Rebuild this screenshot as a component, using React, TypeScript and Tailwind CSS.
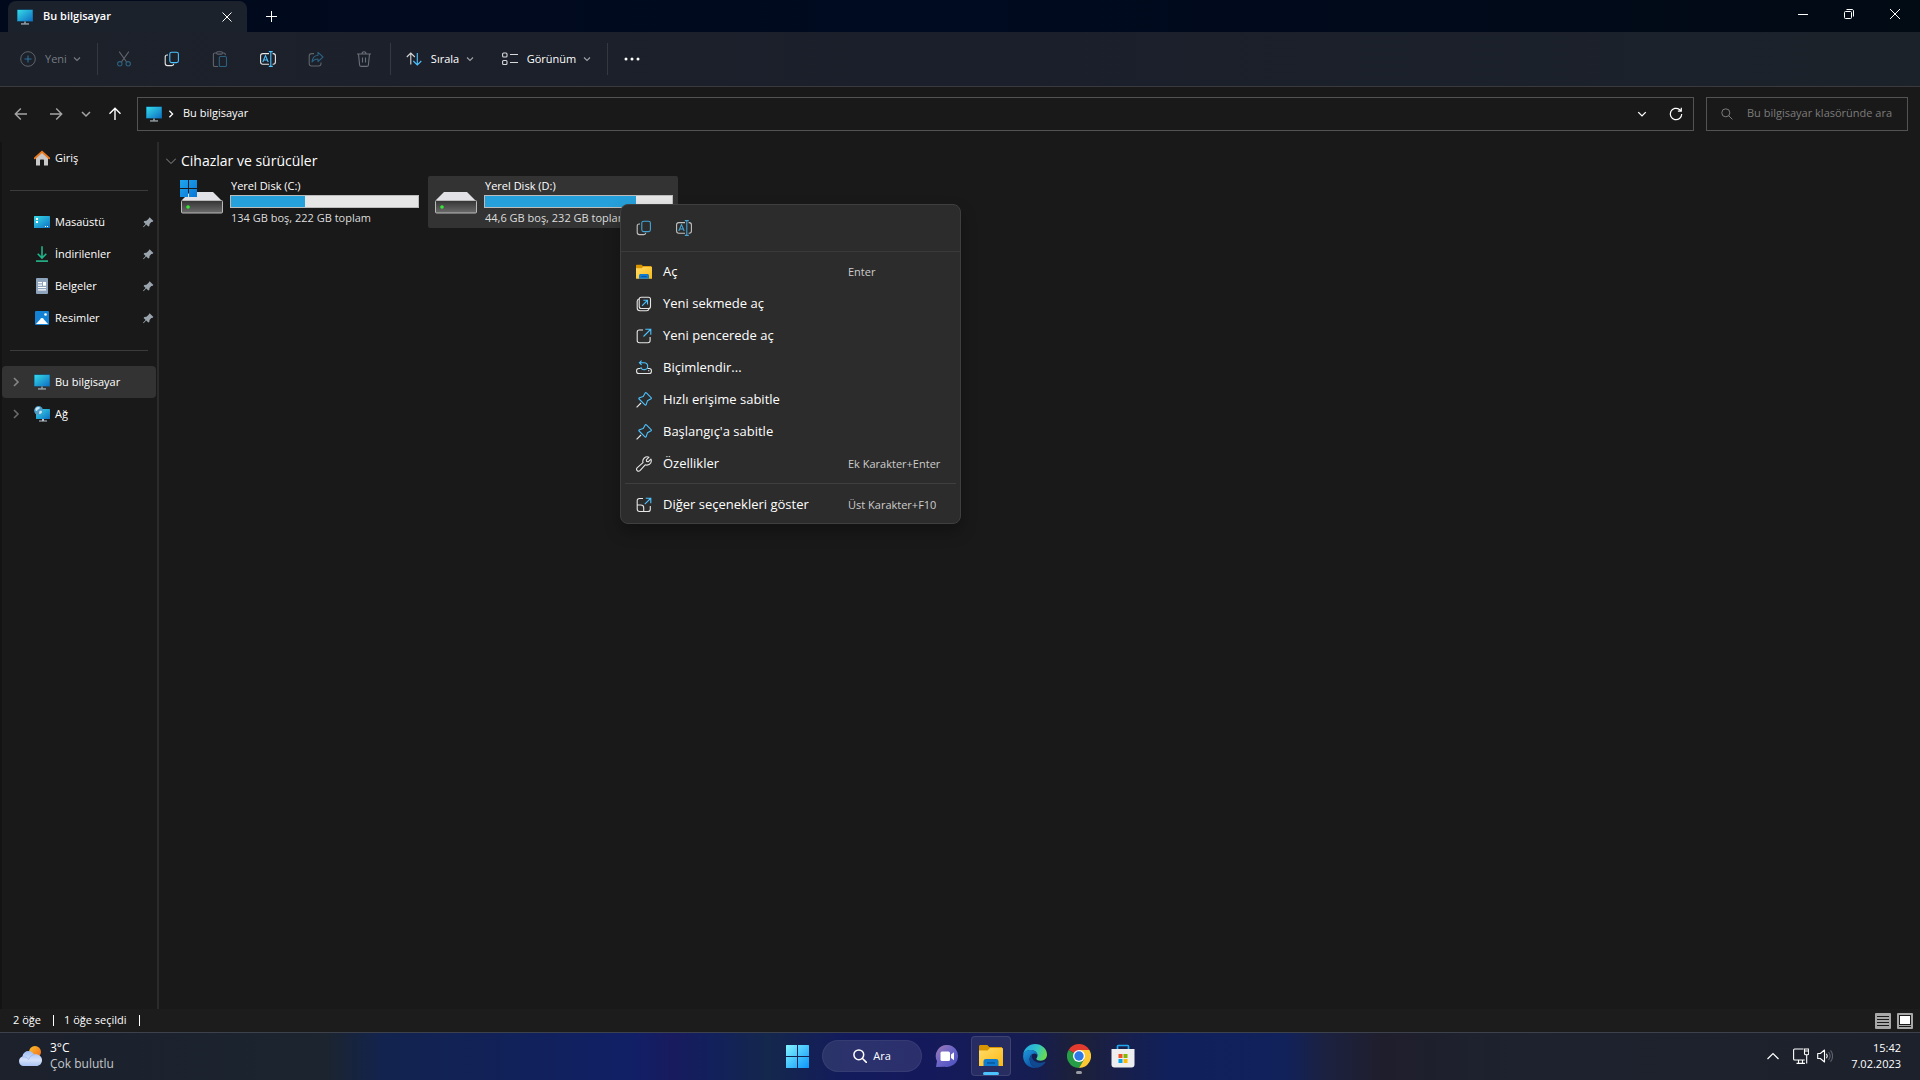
import type { ReactNode } from 'react';

type IconProps = { className?: string };

function ChevronDown({ className = 'h-2 w-2' }: IconProps) {
	return (
		<svg viewBox="0 0 8 8" fill="none" stroke="currentColor" strokeWidth="1.1" className={className}>
			<path d="M1 2.5 4 5.5 7 2.5" />
		</svg>
	);
}

function ChevronRight({ className = 'h-2.5 w-2' }: IconProps) {
	return (
		<svg viewBox="0 0 8 10" fill="none" stroke="currentColor" strokeWidth="1.6" className={className}>
			<path d="M2 1 6 5 2 9" />
		</svg>
	);
}

function MonitorIcon() {
	return (
		<svg viewBox="0 0 16 16" className="h-4 w-4 shrink-0">
			<defs>
				<linearGradient id="screen" x1="0" y1="0" x2="1" y2="1">
					<stop offset="0" stopColor="#35dbe6" />
					<stop offset="1" stopColor="#0f6fc4" />
				</linearGradient>
			</defs>
			<rect x="0" y="0.5" width="16" height="12" rx="0.5" fill="#0c6a9e" />
			<rect x="0.6" y="1" width="14.8" height="11" fill="url(#screen)" />
			<path d="M7 12.5h2v2H7z" fill="#7b8a95" />
			<path d="M4 14.4h8v1.1H4z" fill="#b7c4cc" />
		</svg>
	);
}

function CopyIcon({ className = 'h-4 w-4' }: IconProps) {
	return (
		<svg viewBox="0 0 16 16" fill="none" strokeWidth="1.1" className={className}>
			<path d="M4 4H3.2C2 4 1.2 4.8 1.2 6v6.3c0 1.4.9 2.3 2.3 2.3h4.3c1.2 0 1.9-.7 2-1.8" stroke="#e6e6e6" />
			<rect x="5.8" y="1.2" width="8.6" height="10.4" rx="1.8" stroke="#4cc2ff" />
		</svg>
	);
}

function RenameIcon({ className = 'h-4 w-4' }: IconProps) {
	return (
		<svg viewBox="0 0 16 16" fill="none" strokeWidth="1.1" className={className}>
			<path d="M9 2.6H2.8C1.5 2.6.6 3.5.6 4.8v6.2c0 1.3.9 2.2 2.2 2.2H9M12.6 2.6h.6c1.3 0 2.2.9 2.2 2.2V11c0 1.3-.9 2.2-2.2 2.2h-.6" stroke="#e6e6e6" />
			<path d="M10.8.6v14.8M8.8.6h4M8.8 15.4h4M2.8 11l2.7-6.4L8.2 11M3.7 9h3.6" stroke="#4cc2ff" />
		</svg>
	);
}

function CutIcon() {
	return (
		<svg viewBox="0 0 16 16" fill="none" strokeWidth="1.1" className="h-4 w-4">
			<path d="M3.2.6 10.6 11M12.8.6 5.4 11" stroke="#5f646c" />
			<circle cx="3.8" cy="12.8" r="2.2" stroke="#2c607f" />
			<circle cx="12.2" cy="12.8" r="2.2" stroke="#2c607f" />
		</svg>
	);
}

function PasteIcon() {
	return (
		<svg viewBox="0 0 16 16" fill="none" strokeWidth="1.1" className="h-4 w-4">
			<path d="M4.5 2H2.8C2 2 1.4 2.6 1.4 3.4v10.8c0 .8.6 1.3 1.4 1.3h3.4M10.5 2h1.4c.8 0 1.4.6 1.4 1.4v.9" stroke="#5f646c" />
			<rect x="4.6" y=".7" width="5.8" height="2.4" rx="1.1" stroke="#5f646c" />
			<rect x="7.3" y="5.5" width="7.2" height="10" rx="1.3" stroke="#2c607f" />
		</svg>
	);
}

function ShareIcon() {
	return (
		<svg viewBox="0 0 16 16" fill="none" strokeWidth="1.1" strokeLinejoin="round" className="h-4 w-4">
			<path d="M6 2.6H3.6C2.2 2.6 1.2 3.5 1.2 5v7.6c0 1.5 1 2.4 2.4 2.4h7c1.5 0 2.4-1 2.4-2.4v-1.2" stroke="#5f646c" />
			<path d="M10 1.4 15 6l-5 4.6V8C7.2 8 5.4 8.9 4 11c.3-3.7 2.4-6.5 6-6.8z" stroke="#2c607f" />
		</svg>
	);
}

function TrashIcon() {
	return (
		<svg viewBox="0 0 16 16" fill="none" stroke="#6b7078" strokeWidth="1.1" className="h-4 w-4">
			<path d="M1 3h14M6 3c0-1.4.8-2.2 2-2.2S10 1.6 10 3M2.5 3l1.1 11c.1.9.7 1.4 1.5 1.4h5.8c.8 0 1.4-.5 1.5-1.4L13.5 3M6.5 6.5v5M9.5 6.5v5" />
		</svg>
	);
}

function PinIcon() {
	return (
		<svg viewBox="0 0 12 12" className="h-3 w-3">
			<path d="M7.6 1.2 11.4 5 10.2 6 9.3 6 7.6 7.9 7.3 10 6.3 10.6 4.2 8.5 1.6 11.2 1 10.7 3.6 7.9 1.6 5.9 2.4 5 4.4 4.8 6.4 3z" fill="#9aa4ad" />
		</svg>
	);
}

function PinOutline() {
	return (
		<svg viewBox="0 0 16 16" fill="none" strokeWidth="1.1" strokeLinejoin="round" className="h-4 w-4">
			<path d="M.6 15.4 5 11" stroke="#e6e6e6" />
			<path d="M9.2.9c.3-.4.8-.4 1.2 0l4.7 4.7c.4.4.4.9 0 1.2L11.4 8.8l-1.2 3.8c-.2.6-.8.7-1.2.3L3.1 7c-.4-.4-.3-1 .3-1.2l3.8-1.2z" stroke="#4cc2ff" />
		</svg>
	);
}

function FolderIcon({ className = 'h-4 w-4' }: IconProps) {
	return (
		<svg viewBox="0 0 24 24" className={className}>
			<defs>
				<linearGradient id="folder" x1="0" y1="0" x2="1" y2="1">
					<stop offset="0" stopColor="#ffdc69" />
					<stop offset="1" stopColor="#fdb913" />
				</linearGradient>
			</defs>
			<path d="M0 2.5C0 1.7.6 1 1.5 1h6.8l2 2H23v5H0z" fill="#d99500" />
			<path d="M0 6.5h8.5L11 4h12c.6 0 1 .4 1 1v17H0z" fill="url(#folder)" />
			<path d="M4.5 22v-4.5c0-1.7 1-2.5 2.5-2.5h10c1.5 0 2.5.8 2.5 2.5V22z" fill="#0f7bd0" />
			<path d="M8 18.3h8v1.3H8z" fill="#0a4f91" />
		</svg>
	);
}

function HomeIcon() {
	return (
		<svg viewBox="0 0 16 16" className="h-4 w-4">
			<path d="M2 7 8 2l6 5v8.5h-4v-5c0-.6-.3-1-1-1H7c-.7 0-1 .4-1 1v5H2z" fill="#c9c9c9" />
			<path d="M.8 8.3 8 1.8l7.2 6.5" fill="none" stroke="#ea7a20" strokeWidth="1.9" strokeLinecap="round" />
		</svg>
	);
}

function DesktopIcon() {
	return (
		<svg viewBox="0 0 16 16" className="h-4 w-4">
			<rect y="2" width="16" height="12" rx=".6" fill="url(#screen)" />
			<path d="M2 4h2v2H2zM2 7h2v2H2zM11 12h1v1h-1zM13 12h1v1h-1z" fill="#fff" />
		</svg>
	);
}

function DownloadIcon() {
	return (
		<svg viewBox="0 0 16 16" fill="none" className="h-4 w-4">
			<path d="M8 .2v11M3.7 7.7 8 12l4.3-4.3" stroke="#1fb389" strokeWidth="1.6" />
			<path d="M2 14.3h12v1.6H2z" fill="#25b98c" />
		</svg>
	);
}

function DocumentIcon() {
	return (
		<svg viewBox="0 0 16 16" className="h-4 w-4">
			<rect x="2" width="12" height="16" rx="1" fill="#8ea4bd" />
			<path d="M4 4h4v1.2H4zM4 6.5h4v1.2H4zM9 4h3v3.7H9zM4 9h8v1.1H4zM4 11.3h8v1.1H4z" fill="#fff" />
		</svg>
	);
}

function PictureIcon() {
	return (
		<svg viewBox="0 0 16 16" className="h-4 w-4">
			<rect x="1" y="1" width="14" height="14" rx="1" fill="#1382d4" />
			<path d="M2 14 7.2 8.3c.5-.5 1.1-.5 1.6 0L14 14z" fill="#fff" />
			<circle cx="11.5" cy="4.5" r="1.3" fill="#fff" />
		</svg>
	);
}

function NetworkIcon() {
	return (
		<svg viewBox="0 0 16 16" className="h-4 w-4">
			<rect x="2" y="3" width="14" height="10" rx=".5" fill="url(#screen)" />
			<path d="M8 13h2v1.5H8zM5 14.5h8v1H5z" fill="#b7c4cc" />
			<circle cx="4.6" cy="4.6" r="4.5" fill="#4b9cc8" />
			<path d="M1.5 2.5C3 .8 5.5.8 6 1.8 5.5 3.5 3.5 3 3 5 2 5.5 1 4 1.5 2.5zM5.5 5c1.5-.5 2.7 0 2.5 1C7.5 8 5.5 8.5 5 7.5z" fill="#c8e6f3" />
		</svg>
	);
}

function SearchIcon({ className = 'h-3 w-3' }: IconProps) {
	return (
		<svg viewBox="0 0 12 12" fill="none" stroke="currentColor" className={className}>
			<circle cx="4.8" cy="4.8" r="4" />
			<path d="m7.7 7.7 3.7 3.7" />
		</svg>
	);
}

function Arrow({ className }: IconProps) {
	return (
		<svg viewBox="0 0 14 14" fill="none" stroke="currentColor" strokeWidth="1.4" className={className}>
			<path d="M13 7H1.5M6.8 1.5 1.3 7l5.5 5.5" />
		</svg>
	);
}

function Drive({ system }: { system: boolean }) {
	return (
		<svg viewBox="0 0 48 36" className="h-9 w-12 shrink-0">
			<defs>
				<linearGradient id="drive" x1="0" y1="0" x2="0" y2="1">
					<stop offset="0" stopColor="#333" />
					<stop offset="1" stopColor="#6c6c6c" />
				</linearGradient>
				<linearGradient id="winlogo" x1="0" y1="0" x2="1" y2="1">
					<stop offset="0" stopColor="#1fa5ee" />
					<stop offset="1" stopColor="#0876d6" />
				</linearGradient>
			</defs>
			<path d="M12 14h23l8.500 8.500h-40z" fill="#e2e2e6" />
			<rect x="3.5" y="22.5" width="41" height="12.5" rx="1" fill="url(#drive)" stroke="#b9b9b9" />
			<circle cx="10" cy="29" r="1.8" fill="#35e835" />
			{system && <path d="M2 2h8v8H2zM11 2h8v8h-8zM2 11h8v8H2zM11 11h8v8h-8z" fill="url(#winlogo)" />}
		</svg>
	);
}

function OpenTabIcon() {
	return (
		<svg viewBox="0 0 16 16" fill="none" strokeWidth="1.1" className="h-4 w-4">
			<path d="M3 3C1.8 3.3 1.2 4 1.2 5.2V12c0 1.6 1 2.7 2.7 2.7h6.8c1.2 0 2-.6 2.3-1.7" stroke="#e6e6e6" />
			<rect x="3.2" y="1.2" width="11.3" height="11.3" rx="2" stroke="#e6e6e6" />
			<path d="m6 9.8 5.3-5.3M7.3 4.3h4.2v4.2" stroke="#4cc2ff" />
		</svg>
	);
}

function OpenWindowIcon() {
	return (
		<svg viewBox="0 0 16 16" fill="none" strokeWidth="1.1" className="h-4 w-4">
			<path d="M7 2H3.3C2 2 1.2 2.8 1.2 4v8.5c0 1.3.9 2.2 2.2 2.2h8.5c1.3 0 2.2-.9 2.2-2.2V9" stroke="#e6e6e6" />
			<path d="m7.5 8.5 7-7M9.3 1.2h5.5v5.5" stroke="#4cc2ff" />
		</svg>
	);
}

function FormatIcon() {
	return (
		<svg viewBox="0 0 16 16" fill="none" strokeWidth="1.1" className="h-4 w-4">
			<path d="M4.5 8.5H2.8c-1.3 0-2.2.9-2.2 2.2v.8c0 1.2.9 2 2.2 2h10.4c1.3 0 2.2-.8 2.2-2v-.8c0-1.3-.9-2.2-2.2-2.2h-1.7" stroke="#e6e6e6" />
			<path d="M12 10.7h1.3" stroke="#e6e6e6" />
			<path d="M3.5 2.7h4.7a3.5 3.5 0 1 1-3.4 4.4M5.6.6 3.4 2.7l2.2 2.1" stroke="#4cc2ff" />
		</svg>
	);
}

function WrenchIcon() {
	return (
		<svg viewBox="0 0 16 16" fill="none" stroke="#e6e6e6" strokeWidth="1.1" strokeLinejoin="round" className="h-4 w-4">
			<path d="M13 1.2 10.3 3.9l.3 1.5 1.6.4 2.7-2.7c1.1 2.4-.3 6-4 6-.7 0-1.2-.1-1.7-.3l-5 5.6c-1 1-2.3.9-3 .2-.8-.8-.8-2 .1-2.9l5.7-5C5.9 3 9.500-.3 13 1.2z" />
		</svg>
	);
}

function MoreOptionsIcon() {
	return (
		<svg viewBox="0 0 16 16" fill="none" strokeWidth="1.1" className="h-4 w-4">
			<path d="M7 1.5H3.4c-1.3 0-2.2.9-2.2 2.2V12c0 1.5 1 2.5 2.4 2.5H12c1.4 0 2.3-1 2.3-2.3V9M1.2 8h3.6C6.6 8 7.7 9 7.7 10.7v3.8" stroke="#e6e6e6" />
			<path d="m8.8 7.2 5.7-5.7M9.8 1.2h5v5" stroke="#4cc2ff" />
		</svg>
	);
}

const pinned = [
	{ label: 'Masaüstü', icon: <DesktopIcon /> },
	{ label: 'İndirilenler', icon: <DownloadIcon /> },
	{ label: 'Belgeler', icon: <DocumentIcon /> },
	{ label: 'Resimler', icon: <PictureIcon /> },
];

const drives = [
	{ name: 'Yerel Disk (C:)', info: '134 GB boş, 222 GB toplam', used: 39.6, system: true, selected: false },
	{ name: 'Yerel Disk (D:)', info: '44,6 GB boş, 232 GB toplam', used: 80.8, system: false, selected: true },
];

const menuItems = [
	{ label: 'Aç', icon: <FolderIcon />, shortcut: 'Enter' },
	{ label: 'Yeni sekmede aç', icon: <OpenTabIcon /> },
	{ label: 'Yeni pencerede aç', icon: <OpenWindowIcon /> },
	{ label: 'Biçimlendir...', icon: <FormatIcon /> },
	{ label: 'Hızlı erişime sabitle', icon: <PinOutline /> },
	{ label: "Başlangıç'a sabitle", icon: <PinOutline /> },
	{ label: 'Özellikler', icon: <WrenchIcon />, shortcut: 'Ek Karakter+Enter' },
];

function TitleBar() {
	return (
		<header className="flex h-8 bg-gradient-to-r from-[#010a1c] via-[#000a20] to-[#020a14] pl-2">
			<div className="mt-px flex w-[239px] items-center rounded-t-lg bg-[#1c222b] pl-[9px] pr-2">
				<MonitorIcon />
				<span className="ml-2.5 flex-1 font-semibold">Bu bilgisayar</span>
				<button type="button" aria-label="Sekmeyi kapat" className="flex h-6 w-6 items-center justify-center">
					<svg viewBox="0 0 10 10" stroke="currentColor" className="h-2.5 w-2.5">
						<path d="m.5.5 9 9M9.5.5l-9 9" />
					</svg>
				</button>
			</div>
			<button type="button" aria-label="Yeni sekme" className="ml-2 flex w-8 items-center justify-center">
				<svg viewBox="0 0 11 11" stroke="currentColor" className="h-[11px] w-[11px]">
					<path d="M5.5 0v11M0 5.5h11" />
				</svg>
			</button>
			<div className="ml-auto flex pb-1 pr-0.5">
				<button type="button" aria-label="Simge durumuna küçült" className="flex w-[46px] items-center justify-center">
					<svg viewBox="0 0 10 10" stroke="currentColor" className="h-2.5 w-2.5">
						<path d="M0 5.5h10" />
					</svg>
				</button>
				<button type="button" aria-label="Geri yükle" className="flex w-[46px] items-center justify-center">
					<svg viewBox="0 0 10 10" fill="none" stroke="currentColor" className="h-2.5 w-2.5">
						<rect x=".5" y="2.5" width="7" height="7" rx="1" />
						<path d="M2.5.5H8c.9 0 1.5.6 1.5 1.5v5.5" />
					</svg>
				</button>
				<button type="button" aria-label="Kapat" className="flex w-[46px] items-center justify-center">
					<svg viewBox="0 0 10 10" stroke="currentColor" className="h-2.5 w-2.5">
						<path d="m0 0 10 10M10 0 0 10" />
					</svg>
				</button>
			</div>
		</header>
	);
}

function ToolButton({ label, children }: { label: string; children: ReactNode }) {
	return (
		<button type="button" aria-label={label} className="flex h-8 w-12 items-center justify-center">
			{children}
		</button>
	);
}

function CommandBar() {
	return (
		<div className="flex h-[55px] items-center border-b border-[#3a3a3e] bg-gradient-to-r from-[#1c212a] via-[#1a1f2b] to-[#1c222a] pl-5">
			<button type="button" className="flex w-[77px] items-center text-[#777b82]">
				<svg viewBox="0 0 16 16" fill="none" className="h-4 w-4">
					<circle cx="8" cy="8" r="7.3" stroke="#5f646c" />
					<path d="M8 4.5v7M4.5 8h7" stroke="#2c7099" strokeWidth="1.1" />
				</svg>
				<span className="ml-[9px] mr-1.5">Yeni</span>
				<ChevronDown />
			</button>
			<div className="h-8 w-px bg-[#343940]" />
			<div className="flex pl-0.5">
				<ToolButton label="Kes"><CutIcon /></ToolButton>
				<ToolButton label="Kopyala"><CopyIcon /></ToolButton>
				<ToolButton label="Yapıştır"><PasteIcon /></ToolButton>
				<ToolButton label="Yeniden adlandır"><RenameIcon /></ToolButton>
				<ToolButton label="Paylaş"><ShareIcon /></ToolButton>
				<ToolButton label="Sil"><TrashIcon /></ToolButton>
			</div>
			<div className="mx-0.5 h-8 w-px bg-[#343940]" />
			<button type="button" className="ml-[13px] flex items-center font-medium">
				<svg viewBox="0 0 16 16" fill="none" strokeWidth="1.1" className="h-4 w-4">
					<path d="M4.8 2v11.5M.8 6l4-4 4 4" stroke="#d8d8d8" />
					<path d="M11.3 2v12M7.3 10l4 4 4-4" stroke="#4cc2ff" />
				</svg>
				<span className="ml-2 mr-1.5 w-[30px] whitespace-nowrap">Sırala</span>
				<ChevronDown className="h-2 w-2 text-[#a0a3a8]" />
			</button>
			<button type="button" className="ml-7 flex items-center font-medium">
				<svg viewBox="0 0 16 16" fill="none" stroke="#d8d8d8" strokeWidth="1.1" className="h-4 w-4">
					<rect x=".6" y="2" width="4.4" height="4" rx="1" />
					<rect x=".6" y="9.5" width="4.4" height="4" rx="1" />
					<path d="M8 3.5h8M8 11.5h8" />
				</svg>
				<span className="ml-2 mr-1.5 w-[51px] whitespace-nowrap">Görünüm</span>
				<ChevronDown className="h-2 w-2 text-[#a0a3a8]" />
			</button>
			<div className="ml-4 h-8 w-px bg-[#343940]" />
			<button type="button" aria-label="Daha fazla" className="ml-4 flex h-8 w-4 items-center justify-center">
				<svg viewBox="0 0 16 4" fill="currentColor" className="h-1 w-4">
					<circle cx="2" cy="2" r="1.5" />
					<circle cx="8" cy="2" r="1.5" />
					<circle cx="14" cy="2" r="1.5" />
				</svg>
			</button>
		</div>
	);
}

function AddressRow() {
	return (
		<div className="flex h-[55px] items-center gap-3 pb-0.5 pl-[14px] pr-3">
			<nav className="flex items-center text-[#a5a5a5]">
				<button type="button" aria-label="Geri"><Arrow className="h-3.5 w-3.5" /></button>
				<button type="button" aria-label="İleri" className="ml-[21px]"><Arrow className="h-3.5 w-3.5 rotate-180" /></button>
				<button type="button" aria-label="Son konumlar" className="ml-[18px]">
					<svg viewBox="0 0 10 10" fill="none" stroke="currentColor" strokeWidth="1.5" className="h-2.5 w-2.5">
						<path d="m1 3 4 4 4-4" />
					</svg>
				</button>
				<button type="button" aria-label="Yukarı" className="ml-[17px] text-white"><Arrow className="h-3.5 w-3.5 rotate-90" /></button>
			</nav>
			<div className="ml-[3px] flex h-[34px] flex-1 items-center border border-[#535353] pl-2 pr-2.5">
				<MonitorIcon />
				<ChevronRight className="ml-[5px] h-2 w-2" />
				<button type="button" className="ml-2">Bu bilgisayar</button>
				<button type="button" aria-label="Önceki konumlar" className="ml-auto">
					<ChevronDown className="h-2.5 w-2.5" />
				</button>
				<button type="button" aria-label="Yenile" className="ml-[22px]">
					<svg viewBox="0 0 14 14" fill="none" stroke="currentColor" strokeWidth="1.2" className="h-3.5 w-3.5">
						<path d="M12.7 7A5.7 5.7 0 1 1 10.5 2.5L12.3 4M12.3.8V4.2H8.9" />
					</svg>
				</button>
			</div>
			<label className="flex h-[34px] w-[202px] items-center border border-[#535353] pl-[14px] text-[#7c7c7c]">
				<SearchIcon />
				<input
					type="search"
					aria-label="Bu bilgisayar klasöründe ara"
					placeholder="Bu bilgisayar klasöründe ara"
					className="ml-[14px] min-w-0 flex-1 bg-transparent outline-none placeholder:text-[#7c7c7c]"
				/>
			</label>
		</div>
	);
}

function Sidebar() {
	return (
		<nav className="w-[157px] shrink-0 border-l-2 border-[#131313]">
			<a href="#giris" className="flex h-8 items-center gap-[5px] pl-8">
				<HomeIcon />
				Giriş
			</a>
			<div className="flex h-8 items-center pl-2 pr-[9px]"><hr className="w-full border-[#3b3b3b]" /></div>
			{pinned.map((item) => (
				<a key={item.label} href={`#${item.label}`} className="flex h-8 items-center gap-[5px] pl-8 pr-[3px]">
					{item.icon}
					<span className="flex-1">{item.label}</span>
					<PinIcon />
				</a>
			))}
			<div className="flex h-8 items-center pl-2 pr-[9px]"><hr className="w-full border-[#3b3b3b]" /></div>
			<a href="#bilgisayar" className="mr-px flex h-8 items-center rounded-sm bg-[#333333] pl-2.5">
				<ChevronRight className="mr-[14px] h-2.5 w-2 text-[#868686]" />
				<MonitorIcon />
				<span className="ml-[5px]">Bu bilgisayar</span>
			</a>
			<a href="#ag" className="mr-px flex h-8 items-center pl-2.5">
				<ChevronRight className="mr-[14px] h-2.5 w-2 text-[#6a6a6a]" />
				<NetworkIcon />
				<span className="ml-[5px]">Ağ</span>
			</a>
		</nav>
	);
}

function DriveGrid() {
	return (
		<main className="flex-1 border-l-2 border-[#2b2b2b] pl-[7px] pt-2">
			<h2 className="flex h-[22px] items-center text-sm">
				<svg viewBox="0 0 10 10" fill="none" stroke="#8f8f8f" className="mr-[5px] h-2.5 w-2.5">
					<path d="M0 2.5 5 7.5l5-5" />
				</svg>
				Cihazlar ve sürücüler
			</h2>
			<div className="mt-1 flex flex-wrap gap-1 pl-2">
				{drives.map((drive) => (
					<div
						key={drive.name}
						className={`flex h-[52px] w-[250px] rounded-xs pl-1 pt-0.5 ${drive.selected ? 'bg-[#333333]' : ''}`}
					>
						<Drive system={drive.system} />
						<div className="ml-1 w-[189px] leading-[15px]">
							<div className="pl-px">{drive.name}</div>
							<div
								role="progressbar"
								aria-label={drive.name}
								aria-valuenow={drive.used}
								className="my-0.5 h-[13px] border border-[#bcbcbc] bg-[#e6e6e6]"
							>
								<div className="h-full bg-[#26a0da]" style={{ width: `${drive.used}%` }} />
							</div>
							<div className="whitespace-nowrap pl-px text-[#dddddd]">{drive.info}</div>
						</div>
					</div>
				))}
			</div>
		</main>
	);
}

function ContextMenu() {
	return (
		<div role="menu" className="absolute left-[620px] top-[204px] w-[341px] rounded-lg border border-[#3f3f3f] bg-[#2c2c2c] pb-0.5 text-[13px] shadow-[0_8px_16px_rgba(0,0,0,0.28)]">
			<div className="flex h-[47px] items-center gap-6 border-b border-[#3f3f3f] pl-[15px] opacity-80">
				<button type="button" role="menuitem" aria-label="Kopyala"><CopyIcon /></button>
				<button type="button" role="menuitem" aria-label="Yeniden adlandır"><RenameIcon /></button>
			</div>
			<div className="pt-1">
				{menuItems.map((item) => (
					<button key={item.label} type="button" role="menuitem" className="flex h-8 w-full items-center pl-[15px] text-left">
						{item.icon}
						<span className="ml-[11px] w-[185px]">{item.label}</span>
						<span className="text-[11px] text-[#cccccc]">{item.shortcut}</span>
					</button>
				))}
			</div>
			<hr className="mx-1 mb-[5px] mt-[3px] border-[#3f3f3f]" />
			<button type="button" role="menuitem" className="flex h-8 w-full items-center pl-[15px] text-left">
				<MoreOptionsIcon />
				<span className="ml-[11px] w-[185px]">Diğer seçenekleri göster</span>
				<span className="text-[11px] text-[#cccccc]">Üst Karakter+F10</span>
			</button>
		</div>
	);
}

function StatusBar() {
	return (
		<footer className="flex h-[23px] items-center bg-[#1c1c1c] pl-[13px] pr-[7px]">
			<span className="w-10">2 öğe</span>
			<span className="h-[11px] w-px bg-white" />
			<span className="ml-2.5 w-[75px] whitespace-nowrap">1 öğe seçildi</span>
			<span className="h-[11px] w-px bg-white" />
			<div className="ml-auto flex gap-1.5">
				<button type="button" aria-label="Ayrıntılar">
					<svg viewBox="0 0 16 16" className="h-4 w-4">
						<rect width="16" height="16" rx="1" fill="#a8a8a8" />
						<path d="M2 3.5h12M2 6.5h12M2 9.5h12M2 12.5h12" stroke="#1a1a1a" />
					</svg>
				</button>
				<button type="button" aria-label="Büyük simgeler">
					<svg viewBox="0 0 16 16" className="h-4 w-4">
						<rect width="16" height="16" rx="1" fill="#a8a8a8" />
						<rect x="2.5" y="2.5" width="11" height="9" fill="#fff" stroke="#1a1a1a" />
						<path d="M2 13.5h12" stroke="#1a1a1a" />
					</svg>
				</button>
			</div>
		</footer>
	);
}

function WeatherIcon() {
	return (
		<svg viewBox="0 0 24 20" className="h-5 w-6">
			<defs>
				<linearGradient id="sun" x1="0" y1="0" x2="1" y2="1">
					<stop offset="0" stopColor="#fbc02d" />
					<stop offset="1" stopColor="#f2691b" />
				</linearGradient>
				<linearGradient id="cloud" x1="0" y1="0" x2="0" y2="1">
					<stop offset="0" stopColor="#9dbdf5" />
					<stop offset="0.6" stopColor="#d5e1fa" />
					<stop offset="1" stopColor="#a9c3f3" />
				</linearGradient>
			</defs>
			<circle cx="17" cy="6" r="6" fill="url(#sun)" />
			<path d="M5 20a5 5 0 0 1-.6-9.6C5 7 7.5 5 10.5 5c2.5 0 4.5 1.3 5.3 3.5 4.5-.8 8.2 1.8 8.2 5.7 0 3.4-2.5 5.8-5.8 5.8z" fill="url(#cloud)" />
			<path d="M4.4 11c2.8-.5 5 .3 6.2 2.6C11.5 11 13.5 9 16 8.7" fill="none" stroke="#8fb0ef" strokeWidth=".6" />
		</svg>
	);
}

function TaskButton({ label, active, running, children }: { label: string; active?: boolean; running?: boolean; children: ReactNode }) {
	return (
		<button
			type="button"
			aria-label={label}
			className={`relative flex h-10 w-10 items-center justify-center rounded ${active ? 'border border-white/10 bg-white/8' : ''}`}
		>
			{children}
			{active && <span className="absolute bottom-0 h-[3px] w-4 rounded-full bg-[#4cc2ff]" />}
			{running && <span className="absolute bottom-0.5 h-[3px] w-1.5 rounded-full bg-[#9a9aa5]" />}
		</button>
	);
}

function Taskbar() {
	return (
		<footer className="grid h-12 grid-cols-[1fr_auto_1fr] items-center border-t border-[#3c414c] bg-[linear-gradient(90deg,#1c212c_0%,#1b242f_17%,#12234f_20%,#11215a_27%,#111f66_33%,#181b5e_35%,#12205c_37%,#14274c_40%,#131b5c_44%,#14195c_48%,#161d50_54%,#1c2038_56%,#191f48_58%,#10205c_61%,#11215a_67%,#1b2140_69%,#1f1e2d_72%,#1d222e_79%,#1c212b_100%)] pb-px">
			<button type="button" className="flex items-center pl-[18px] text-left text-xs/4">
				<WeatherIcon />
				<span className="ml-2">
					<span className="block">3°C</span>
					<span className="block text-[#c4c7cc]">Çok bulutlu</span>
				</span>
			</button>
			<div className="flex items-center gap-1">
				<TaskButton label="Başlat">
					<svg viewBox="0 0 23 23" className="h-[23px] w-[23px]">
						<defs>
							<linearGradient id="start" gradientUnits="userSpaceOnUse" x1="0" y1="0" x2="23" y2="23">
								<stop offset="0" stopColor="#83f4ff" />
								<stop offset="1" stopColor="#0a95fb" />
							</linearGradient>
						</defs>
						<path d="M0 .6C0 .3.3 0 .6 0H11v11H0zM12 0h10.4c.3 0 .6.3.6.6V11H12zM0 12h11v11H.6c-.3 0-.6-.3-.6-.6zM12 12h11v10.4c0 .3-.3.6-.6.6H12z" fill="url(#start)" />
					</svg>
				</TaskButton>
				<button type="button" className="mx-px flex h-8 w-[100px] items-center justify-center gap-1.5 rounded-full border border-white/5 bg-white/10 font-medium">
					<svg viewBox="0 0 14 14" fill="none" stroke="currentColor" strokeWidth="1.5" className="h-3.5 w-3.5">
						<circle cx="5.8" cy="5.8" r="4.9" />
						<path d="m9.5 9.5 3.9 3.9" strokeLinecap="round" />
					</svg>
					Ara
				</button>
				<TaskButton label="Sohbet">
					<svg viewBox="0 0 24 24" className="h-6 w-6">
						<defs>
							<linearGradient id="chat" x1="0" y1="0" x2="1" y2="1">
								<stop offset="0" stopColor="#a07bb8" />
								<stop offset="0.5" stopColor="#6a64c6" />
								<stop offset="1" stopColor="#4a4fc0" />
							</linearGradient>
						</defs>
						<path d="M12.5 1A11 11 0 1 1 10 22.8L1 23l1-6A11 11 0 0 1 12.5 1z" fill="url(#chat)" />
						<rect x="5.5" y="7.5" width="9.5" height="9.5" rx="1.5" fill="#fff" />
						<path d="m16 10.5 3-2.2v8L16 14z" fill="#fff" />
					</svg>
				</TaskButton>
				<TaskButton label="Dosya Gezgini" active><FolderIcon className="h-6 w-6" /></TaskButton>
				<TaskButton label="Microsoft Edge">
					<svg viewBox="0 0 24 24" className="h-6 w-6">
						<defs>
							<linearGradient id="edgeTop" x1="0" y1="0.3" x2="1" y2="0.6">
								<stop offset="0" stopColor="#22a7e2" />
								<stop offset="0.55" stopColor="#33c6c8" />
								<stop offset="1" stopColor="#6bdc45" />
							</linearGradient>
							<linearGradient id="edgeMid" x1="0" y1="0" x2="0.6" y2="1">
								<stop offset="0" stopColor="#1e9be0" />
								<stop offset="1" stopColor="#0d4fa0" />
							</linearGradient>
						</defs>
						<path d="M.2 10.5C1 4.5 6 0 12 0c7 0 12 5 12 10.6 0 3.9-2.8 6.1-6.2 6.1-2.7 0-4.5-1-4.5-2 0-.8 1.2-1.2 1.2-3.3C14.5 8.5 11.5 6 8 6 4 6 1.5 8 .2 10.5z" fill="url(#edgeTop)" />
						<path d="M.1 12C.3 8.5 3.5 6 8 6c3.5 0 6.5 2.5 6.5 5.4-.5-1.2-1.7-2-3-2-3 0-5.3 3-4.8 6.8.5 4 3.3 7.3 7.5 7.5-.7.2-1.5.3-2.2.3C5 24 0 18.5.1 12z" fill="url(#edgeMid)" />
						<path d="M9.5 10c-2 1-3.1 3.5-2.8 6.2.5 4 3.7 7.5 8 7.5 3.3-.8 6-2.6 7.6-5.3.3-.5-.1-.8-.6-.6-5.7 2.5-11.700-.3-12.700-4.3-.3-1.300-.1-2.500.5-3.500z" fill="#10498f" />
					</svg>
				</TaskButton>
				<TaskButton label="Google Chrome" running>
					<svg viewBox="0 0 24 24" className="h-6 w-6">
						<path d="M12 12 1.6 6A12 12 0 0 1 22.4 6H12z" fill="#e33b2e" />
						<path d="M12 12 1.6 6A12 12 0 0 0 12 24l5.2-9z" fill="#259e47" />
						<path d="M12 6h10.4A12 12 0 0 1 12 24l5.2-9z" fill="#fcc934" />
						<circle cx="12" cy="12" r="6" fill="#fff" />
						<circle cx="12" cy="12" r="4.7" fill="#2f78e8" />
					</svg>
				</TaskButton>
				<TaskButton label="Microsoft Store">
					<svg viewBox="0 0 24 24" className="h-6 w-6">
						<path d="M6.5 6V2.3c0-.5.3-.8.8-.8h9.4c.5 0 .8.3.8.8V6" fill="none" stroke="#20a8ee" strokeWidth="1.7" />
						<path d="M.5 5h23v15.5c0 2-1 3-3 3h-17c-2 0-3-1-3-3z" fill="#eeeeee" />
						<path d="M7.5 10h4v4h-4z" fill="#f25022" />
						<path d="M12.5 10h4v4h-4z" fill="#7fba00" />
						<path d="M7.5 15h4v4h-4z" fill="#00a4ef" />
						<path d="M12.5 15h4v4h-4z" fill="#ffb900" />
					</svg>
				</TaskButton>
			</div>
			<div className="flex items-center justify-end pr-[19px]">
				<button type="button" aria-label="Gizli simgeler" className="mr-[14px]">
					<svg viewBox="0 0 12 12" fill="none" stroke="currentColor" strokeWidth="1.2" className="h-3 w-3">
						<path d="M.5 9 6 3.5 11.5 9" />
					</svg>
				</button>
				<button type="button" className="flex items-center gap-2" aria-label="Ağ ve ses">
					<svg viewBox="0 0 16 16" fill="none" stroke="currentColor" strokeWidth="1.1" className="h-4 w-4">
						<path d="M10.5 1H1.6C1 1 .6 1.4.6 2v9c0 .6.4 1 1 1h10.2M5.5 12v3M9.5 12v3M3.5 15.4H12M13.7 7v8.5" />
						<path d="M11.5 1h4.2v4.5c0 .8-.6 1.3-1.3 1.3h-1.6c-.7 0-1.3-.5-1.3-1.3zM11.5 3h4" />
					</svg>
					<svg viewBox="0 0 16 16" fill="none" stroke="currentColor" strokeWidth="1.1" className="h-4 w-4">
						<path d="M.7 5.5h2.6L7.5 2v12l-4.2-3.5H.7z" strokeLinejoin="round" />
						<path d="M9.5 5.8c.9 1.3.9 3.1 0 4.4" />
						<path d="M11.5 4c2 2.4 2 5.6 0 8M13.5 2.3c2.8 3.3 2.8 8.1 0 11.4" stroke="#5c616b" />
					</svg>
				</button>
				<button type="button" className="ml-[18px] text-right leading-4">
					<span className="block">15:42</span>
					<span className="block">7.02.2023</span>
				</button>
			</div>
		</footer>
	);
}

export default function App() {
	return (
		<div className="relative flex h-screen flex-col overflow-hidden bg-[#191919] font-['Open_Sans','Noto_Sans',sans-serif] text-[11px] text-white">
			<TitleBar />
			<CommandBar />
			<AddressRow />
			<div className="flex min-h-0 flex-1">
				<Sidebar />
				<DriveGrid />
			</div>
			<StatusBar />
			<Taskbar />
			<ContextMenu />
		</div>
	);
}
